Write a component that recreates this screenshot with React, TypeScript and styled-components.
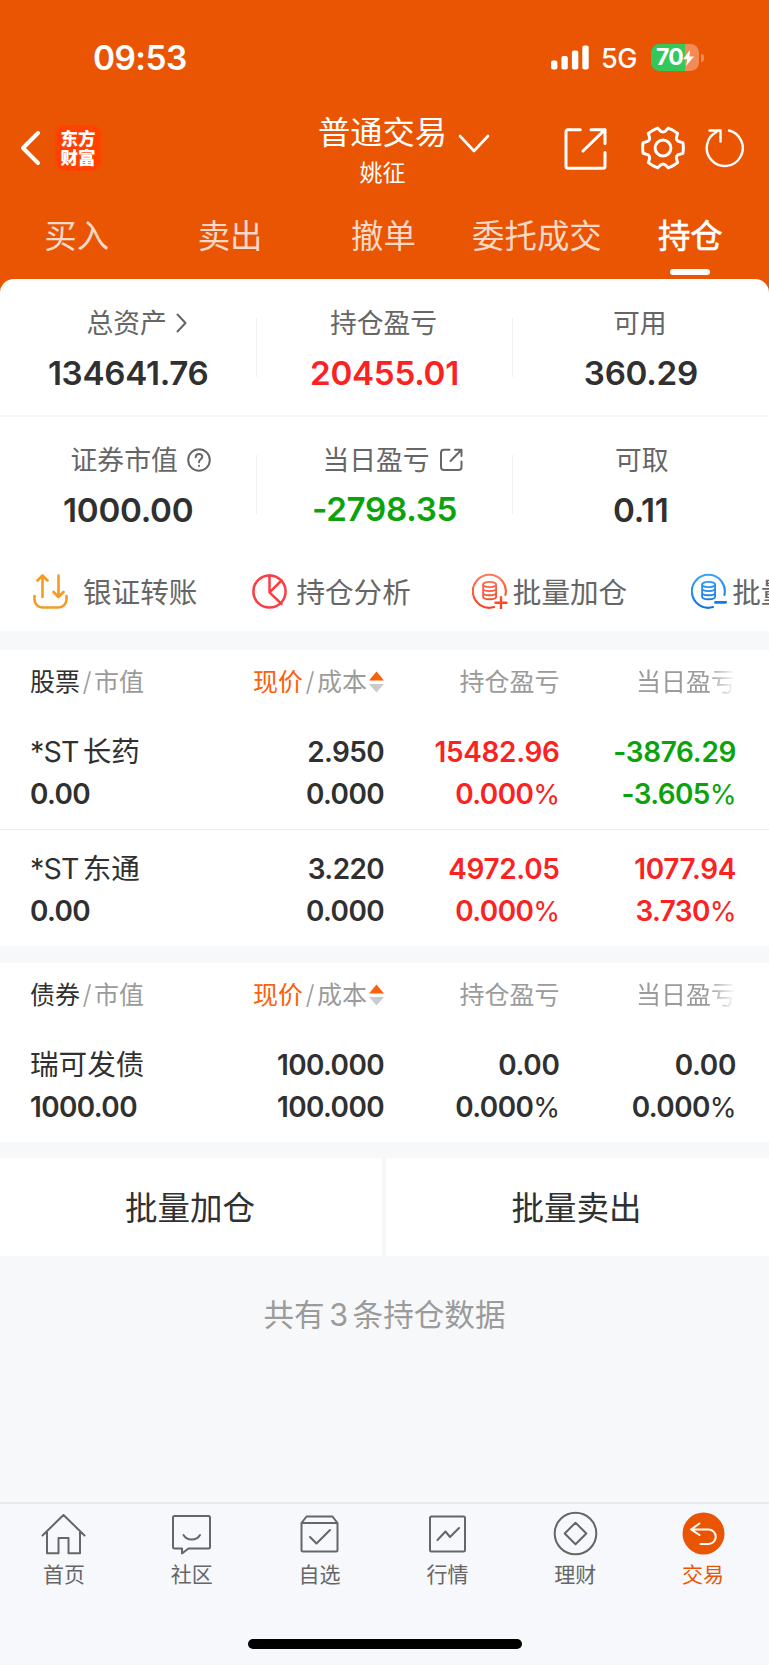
import React from "react";
import styled, { createGlobalStyle, css } from "styled-components";

const colors = {
  brand: "#ea5504",
  page: "#f7f8fa",
  ink: "#303030",
  label: "#666666",
  muted: "#9b9b9b",
  up: "#fb2222",
  down: "#0ba30b",
  accent: "#fb600a",
};

const Global = createGlobalStyle`
  *, *::before, *::after { box-sizing: border-box; }
  body {
    margin: 0;
    background: #f7f8fb;
    color: ${colors.ink};
    font-family: Inter, "Noto Sans CJK SC", sans-serif;
    text-autospace: no-autospace;
  }
  svg { display: block; flex: none; }
`;

type Tone = "ink" | "up" | "down";

const Screen = styled.div`
  width: 769px;
  height: 1665px;
  display: flex;
  flex-direction: column;
  overflow: hidden;
`;

const Header = styled.header`
  height: 293px;
  flex: none;
  background: ${colors.brand};
  color: #fff;
`;

const StatusBar = styled.div`
  height: 115px;
  padding: 0 65px 0 93px;
  display: flex;
  align-items: center;
  justify-content: space-between;
`;

const Clock = styled.span`
  font-size: 33.5px;
  font-weight: 580;
  line-height: 40px;
  letter-spacing: -0.6px;
`;

const StatusIcons = styled.div`
  display: flex;
  align-items: center;
  gap: 12px;
`;

const Network = styled.span`
  font-size: 27px;
  font-weight: 450;
  line-height: 30px;
  width: 38px;
  padding-top: 2px;
  letter-spacing: -0.5px;
`;

const Battery = styled.div`
  display: flex;
  align-items: center;
  gap: 2px;
`;

const BatteryBody = styled.div`
  width: 48px;
  height: 27px;
  padding-left: 5px;
  border-radius: 8.5px;
  display: flex;
  align-items: center;
  background: linear-gradient(90deg, #34c759 34px, #f28b55 34px);
  font-size: 23px;
  font-weight: 700;
  line-height: 27px;
  letter-spacing: -0.8px;
`;

const BatteryTip = styled.i`
  width: 3px;
  height: 8px;
  border-radius: 0 3px 3px 0;
  background: #f28b55;
`;

const NavBar = styled.div`
  height: 75px;
  padding: 0 25px 0 20px;
  display: grid;
  grid-template-columns: 1fr auto 1fr;
  align-items: start;
`;

const NavLeft = styled.div`
  padding-top: 10px;
  display: flex;
  align-items: center;
  gap: 13px;
`;

const Logo = styled.div`
  width: 46px;
  height: 46px;
  border-radius: 9px;
  display: flex;
  align-items: center;
  justify-content: center;
  background: #ff4200;
  text-align: center;
  font-size: 17.5px;
  font-weight: 900;
  line-height: 19.5px;
`;

const TitleBlock = styled.div`
  display: flex;
  margin-left: 44px;
  gap: 11px;
`;

const Titles = styled.div`
  display: flex;
  flex-direction: column;
  align-items: center;
`;

const Title = styled.h1`
  margin: 0;
  font-size: 32.3px;
  font-weight: 400;
  line-height: 36px;
`;

const Subtitle = styled.div`
  margin-top: 9px;
  font-size: 23px;
  line-height: 26px;
`;

const NavRight = styled.div`
  padding-top: 11px;
  display: flex;
  justify-content: flex-end;
  align-items: center;
`;

const TabList = styled.nav`
  display: grid;
  grid-template-columns: repeat(5, 1fr);
  padding-right: 2px;
`;

const Tab = styled.a<{ $active?: boolean }>`
  height: 85px;
  padding-top: 27px;
  display: flex;
  flex-direction: column;
  align-items: center;
  gap: 12px;
  font-size: 32.4px;
  line-height: 40px;
  color: rgba(255, 255, 255, ${(p) => (p.$active ? 1 : 0.78)});
  ${(p) =>
    p.$active &&
    css`
      -webkit-text-stroke: 0.6px #fff;
      &::after {
        content: "";
        width: 40px;
        height: 6px;
        border-radius: 3px;
        background: #fff;
      }
    `}
`;

const Summary = styled.section`
  flex: none;
  margin-top: -14px;
  height: 352px;
  border-radius: 14px 14px 0 0;
  background: #fff;
`;

const StatRow = styled.div`
  height: 136px;
  padding-top: 27px;
  display: grid;
  grid-template-columns: repeat(3, 1fr);
  & + & {
    padding-top: 26px;
    border-top: 2px solid #f7f7f8;
  }
`;

const Stat = styled.div<{ $raised?: boolean }>`
  position: relative;
  display: flex;
  flex-direction: column;
  align-items: center;
  gap: ${(p) => (p.$raised ? 13 : 14)}px;
  &:not(:last-child)::after {
    content: "";
    position: absolute;
    right: -0.5px;
    top: 12px;
    width: 1px;
    height: 59px;
    background: #f0f0f0;
  }
`;

const StatLabel = styled.div<{ $shift?: number }>`
  display: flex;
  align-items: center;
  gap: 9px;
  height: 34px;
  margin-left: ${(p) => p.$shift ?? 0}px;
  font-size: 26.8px;
  line-height: 34px;
  color: ${colors.label};
`;

const StatValue = styled.div<{ $tone: Tone }>`
  font-size: 33.2px;
  font-weight: 570;
  line-height: 38px;
  letter-spacing: -0.3px;
  color: ${(p) => colors[p.$tone]};
`;

const Actions = styled.div`
  height: 80px;
  padding-left: 33px;
  display: flex;
  align-items: center;
  overflow: hidden;
`;

const Action = styled.a<{ $gap: number }>`
  flex: 0 0 219.4px;
  display: flex;
  align-items: center;
  gap: ${(p) => p.$gap}px;
  white-space: nowrap;
  font-size: 28.6px;
  line-height: 36px;
  color: ${colors.label};
  span { padding-top: 3px; }
`;

const Holdings = styled.section<{ $gap: number }>`
  flex: none;
  margin-top: ${(p) => p.$gap}px;
  background: #fff;
`;

const columns = css`
  display: grid;
  grid-template-columns: 178px 176px 175.5px 176.5px;
  padding: 0 32px 0 30px;
`;

const HoldingsHead = styled.div`
  ${columns}
  height: 63px;
  align-items: center;
  font-size: 25px;
  line-height: 30px;
  color: ${colors.muted};
`;

const HeadCell = styled.div<{ $end?: boolean; $fade?: boolean }>`
  display: flex;
  align-items: center;
  justify-content: ${(p) => (p.$end ? "flex-end" : "flex-start")};
  white-space: nowrap;
  ${(p) =>
    p.$fade &&
    css`
      mask-image: linear-gradient(90deg, #000 calc(100% - 28px), transparent);
    `}
`;

const Emphasis = styled.span<{ $accent?: boolean }>`
  color: ${(p) => (p.$accent ? colors.accent : colors.ink)};
`;

const Slash = styled.span`
  width: 14px;
  text-align: center;
  font-size: 26px;
  font-weight: 300;
`;

const HoldingRow = styled.div`
  ${columns}
  height: 116px;
  padding-top: 18px;
  align-items: start;
  & + & {
    height: 117px;
    border-top: 1px solid #ececee;
  }
`;

const Cell = styled.div<{ $tone?: Tone; $end?: boolean }>`
  text-align: ${(p) => (p.$end ? "right" : "left")};
  font-size: 27.9px;
  font-weight: 570;
  line-height: 42px;
  letter-spacing: -0.3px;
  color: ${(p) => colors[p.$tone ?? "ink"]};
`;

const Rate = styled.div`
  letter-spacing: -0.6px;
`;

const Percent = styled.span`
  font-size: 0.98em;
  font-weight: 440;
`;

const Name = styled.div`
  font-size: 28.6px;
  font-weight: 400;
  letter-spacing: 0;
`;

const Value = styled.div`
  letter-spacing: -0.6px;
`;

const Ticker = styled.span`
  margin-right: 4px;
  letter-spacing: -0.8px;
`;

const BulkActions = styled.div`
  flex: none;
  margin-top: 16px;
  display: grid;
  grid-template-columns: 382px 1fr;
  gap: 4px;
  background: ${colors.page};
`;

const BulkButton = styled.button`
  height: 98px;
  padding: 4px 2px 0 0;
  border: 0;
  background: #fff;
  color: ${colors.ink};
  font: 400 32.5px/40px Inter, "Noto Sans CJK SC", sans-serif;
`;

const Count = styled.p`
  margin: 0;
  padding-top: 39px;
  flex: 1;
  text-align: center;
  font-size: 30.6px;
  line-height: 40px;
  color: ${colors.muted};
  span { margin: 0 4.5px; }
`;

const Body = styled.main`
  flex: 1;
  display: flex;
  flex-direction: column;
  background: ${colors.page};
`;

const BottomBar = styled.footer`
  height: 163px;
  flex: none;
  border-top: 2px solid #e9eaec;
  background: #f7f8fb;
  display: flex;
  flex-direction: column;
  justify-content: space-between;
  padding-bottom: 16px;
`;

const BottomNav = styled.nav`
  width: 767px;
  display: grid;
  grid-template-columns: repeat(6, 1fr);
`;

const BottomItem = styled.a<{ $active?: boolean }>`
  padding-top: 7px;
  display: flex;
  flex-direction: column;
  align-items: center;
  gap: 5px;
  font-size: 21px;
  line-height: 28px;
  color: ${(p) => (p.$active ? colors.brand : colors.label)};
`;

const HomeIndicator = styled.div`
  width: 274px;
  height: 10px;
  border-radius: 5px;
  background: #000;
  align-self: center;
`;

const Line = ({
  w,
  h,
  sw,
  children,
  className,
}: {
  w: number;
  h: number;
  sw: number;
  children: React.ReactNode;
  className?: string;
}) => (
  <svg
    className={className}
    width={w}
    height={h}
    viewBox={`0 0 ${w} ${h}`}
    fill="none"
    stroke="currentColor"
    strokeWidth={sw}
    strokeLinecap="round"
    strokeLinejoin="round"
  >
    {children}
  </svg>
);

const TitleChevron = styled(Line)`
  margin-top: 19px;
`;

const NavIcon = styled(Line)<{ $space: number }>`
  margin-right: ${(p) => p.$space}px;
`;

const TintedIcon = styled(Line)<{ $tint: string }>`
  color: ${(p) => p.$tint};
`;

const SignalIcon = () => (
  <svg width="38" height="25" viewBox="0 0 38 25" fill="#fff">
    <rect x="0" y="15.5" width="6.4" height="9" rx="2" />
    <rect x="10.4" y="11" width="6.4" height="13.5" rx="2" />
    <rect x="20.9" y="5.5" width="6.4" height="19" rx="2" />
    <rect x="31.3" y="0.5" width="6.4" height="24" rx="2" />
  </svg>
);

const gearPath = (() => {
  const at = (deg: number, r: number) => {
    const a = (deg * Math.PI) / 180;
    return `${(22 + r * Math.cos(a)).toFixed(2)} ${(22 + r * Math.sin(a)).toFixed(2)}`;
  };
  let d = `M${at(-15, 20.6)}`;
  for (let k = 0; k < 6; k++) {
    const t = k * 60;
    d += `Q${at(t, 20.8)} ${at(t + 15, 20.6)}L${at(t + 19, 18.4)}Q${at(t + 30, 13.8)} ${at(t + 41, 18.4)}L${at(t + 45, 20.6)}`;
  }
  return d + "Z";
})();

const TransferIcon = () => (
  <TintedIcon w={35} h={35} sw={2.6} $tint="#f59a23">
    <path d="M9.5 23V1.500M4.500 6.500l5-5 5 5M25.500 1.500V23M20.500 18l5 5 5-5" />
    <path d="M1.500 22v3.500a8 8 0 0 0 8 8h16a8 8 0 0 0 8-8V22" />
  </TintedIcon>
);

const PieIcon = () => (
  <TintedIcon w={35} h={35} sw={2.5} $tint="#fb3d42">
    <circle cx="17.5" cy="17.5" r="16.1" />
    <path d="M17.5 1.5v16.8L29.5 6.5M17.5 18.3l12 11.5" />
  </TintedIcon>
);

const CoinsIcon = ({ kind }: { kind: "plus" | "minus" }) => {
  const id = `coins-${kind}`;
  const [from, to] = kind === "plus" ? ["#ff7a5c", "#fb3d22"] : ["#36a6fb", "#0f6fea"];
  return (
    <svg
      width="36"
      height="36"
      viewBox="0 0 36 36"
      fill="none"
      stroke={`url(#${id})`}
      strokeWidth="2.1"
      strokeLinecap="round"
    >
      <defs>
        <linearGradient id={id} gradientUnits="userSpaceOnUse" x1="0" y1="0" x2="0" y2="36">
          <stop stopColor={from} />
          <stop offset="1" stopColor={to} />
        </linearGradient>
      </defs>
      <path d="M22 34.1A16.5 16.5 0 1 1 33.4 22" />
      <g strokeWidth="1.8">
        <ellipse cx="17.6" cy="11.5" rx="6.5" ry="2.6" />
        <path d="M11.1 11.5v12.2c0 3.4 13 3.4 13 0V11.5M11.1 15.6c0 3.4 13 3.4 13 0M11.1 19.7c0 3.4 13 3.4 13 0" />
      </g>
      {kind === "plus" ? (
        <path d="M23.5 29.8h11M29 24.3v11" strokeWidth="2.4" />
      ) : (
        <path d="M24.5 29.4h10v.02" strokeWidth="2.8" />
      )}
    </svg>
  );
};

const SortArrows = styled.svg`
  margin-left: 2px;
`;

const SortIcon = () => (
  <SortArrows width="15" height="22" viewBox="0 0 15 22">
    <path d="M7.5 0.5 15 9.5H0z" fill={colors.accent} />
    <path d="M7.5 21.5 15 13H0z" fill="#cbcbcb" />
  </SortArrows>
);

interface Holding {
  ticker?: string;
  name: string;
  value: string;
  price: string;
  cost: string;
  total: [string, string, Tone];
  today: [string, string, Tone];
}

const stocks: Holding[] = [
  { ticker: "*ST", name: "长药", value: "0.00", price: "2.950", cost: "0.000", total: ["15482.96", "0.000", "up"], today: ["-3876.29", "-3.605", "down"] },
  { ticker: "*ST", name: "东通", value: "0.00", price: "3.220", cost: "0.000", total: ["4972.05", "0.000", "up"], today: ["1077.94", "3.730", "up"] },
];

const bonds: Holding[] = [
  { name: "瑞可发债", value: "1000.00", price: "100.000", cost: "100.000", total: ["0.00", "0.000", "ink"], today: ["0.00", "0.000", "ink"] },
];

const ProfitCell = ({ data: [amount, rate, tone] }: { data: [string, string, Tone] }) => (
  <Cell $end $tone={tone}>
    <div>{amount}</div>
    <Rate>
      {rate}
      <Percent>%</Percent>
    </Rate>
  </Cell>
);

const HoldingsTable = ({ title, rows, gap }: { title: string; rows: Holding[]; gap: number }) => (
  <Holdings $gap={gap}>
    <HoldingsHead>
      <HeadCell>
        <Emphasis>{title}</Emphasis>
        <Slash>/</Slash>市值
      </HeadCell>
      <HeadCell $end>
        <Emphasis $accent>现价</Emphasis>
        <Slash>/</Slash>成本
        <SortIcon />
      </HeadCell>
      <HeadCell $end>持仓盈亏</HeadCell>
      <HeadCell $end $fade>当日盈亏</HeadCell>
    </HoldingsHead>
    {rows.map((r) => (
      <HoldingRow key={r.name}>
        <Cell>
          <Name>
            {r.ticker && <Ticker>{r.ticker}</Ticker>}
            {r.name}
          </Name>
          <Value>{r.value}</Value>
        </Cell>
        <Cell $end>
          <Value>{r.price}</Value>
          <Value>{r.cost}</Value>
        </Cell>
        <ProfitCell data={r.total} />
        <ProfitCell data={r.today} />
      </HoldingRow>
    ))}
  </Holdings>
);

const bottomItems: { label: string; icon: React.ReactNode; active?: boolean }[] = [
  { label: "首页", icon: <path d="M1.5 24.5 22.5 4 43.5 24.5M6 21v21.2h11.5V27h10v15.2H39V21" /> },
  { label: "社区", icon: <><path d="M5.5 5h34a1.5 1.5 0 0 1 1.5 1.5v29.5a1.5 1.5 0 0 1-1.5 1.5H19.5L13 42.5v-5H5.5A1.5 1.5 0 0 1 4 36V6.5A1.5 1.5 0 0 1 5.5 5z" /><path d="M14.5 24c3.5 6 13 6 16.5 0" /></> },
  { label: "自选", icon: <><path d="M4.5 12 9.5 5.5h26L40.5 12v27a1.5 1.5 0 0 1-1.5 1.5H6A1.5 1.5 0 0 1 4.5 39zM4.5 12h36" /><path d="M13 26l6.5 6.5L33 19" /></> },
  { label: "行情", icon: <><rect x="5" y="5.5" width="35" height="35" rx="1.5" /><path d="M12.5 29l8-8.5 4.500 5.500 9-9" /></> },
  { label: "理财", icon: <><circle cx="22.5" cy="22.5" r="20.8" /><path d="M22.5 11.7 33.3 22.5 22.5 33.3 11.7 22.5z" /></> },
  { label: "交易", active: true, icon: <><circle cx="22.5" cy="22.5" r="21" fill={colors.brand} stroke="none" /><path d="M18.5 12.5 10 18.5l8.5 5.5M11 18.5h16.5a7 7 0 0 1 0 14.5h-8" stroke="#fff" strokeWidth="2" /></> },
];

const App = () => (
  <>
    <Global />
    <Screen>
      <Header>
        <StatusBar>
          <Clock>09:53</Clock>
          <StatusIcons>
            <SignalIcon />
            <Network>5G</Network>
            <Battery>
              <BatteryBody>
                70
                <svg width="11" height="16" viewBox="0 0 11 16" fill="#fff">
                  <path d="M7 0 0 9.3h4.3L3 16l8-9.500H6.500z" />
                </svg>
              </BatteryBody>
              <BatteryTip />
            </Battery>
          </StatusIcons>
        </StatusBar>
        <NavBar>
          <NavLeft>
            <Line w={22} h={36} sw={4}>
              <path d="M18 3 3 18 18 33" />
            </Line>
            <Logo>
              东方
              <br />
              财富
            </Logo>
          </NavLeft>
          <TitleBlock>
            <Titles>
              <Title>普通交易</Title>
              <Subtitle>姚征</Subtitle>
            </Titles>
            <TitleChevron w={32} h={20} sw={2.6}>
              <path d="M2 2 16 17 30 2" />
            </TitleChevron>
          </TitleBlock>
          <NavRight>
            <NavIcon w={44} h={44} sw={3} $space={34}>
              <path d="M17.3 3.7H5a2 2 0 0 0-2 2v34.600a2 2 0 0 0 2 2h35a2 2 0 0 0 2-2V26.500M28 3.700h14V17.500M42 3.700 20 25" />
            </NavIcon>
            <NavIcon w={44} h={44} sw={3} $space={19}>
              <path d={gearPath} />
              <circle cx="22" cy="22" r="7.9" />
            </NavIcon>
            <Line w={40} h={44} sw={2.4}>
              <path d="M25 4.5A18 18 0 1 1 12.5 6M5.5 4.500h11v11" />
            </Line>
          </NavRight>
        </NavBar>
        <TabList>
          {["买入", "卖出", "撤单", "委托成交", "持仓"].map((t) => (
            <Tab key={t} $active={t === "持仓"}>
              {t}
            </Tab>
          ))}
        </TabList>
      </Header>

      <Body>
        <Summary>
          <StatRow>
            <Stat>
              <StatLabel $shift={17}>
                总资产
                <Line w={11} h={20} sw={2}>
                  <path d="M1.5 1.500 9.500 10l-8 8.500" />
                </Line>
              </StatLabel>
              <StatValue $tone="ink">134641.76</StatValue>
            </Stat>
            <Stat>
              <StatLabel $shift={-2}>持仓盈亏</StatLabel>
              <StatValue $tone="up">20455.01</StatValue>
            </Stat>
            <Stat>
              <StatLabel $shift={-2}>可用</StatLabel>
              <StatValue $tone="ink">360.29</StatValue>
            </Stat>
          </StatRow>
          <StatRow>
            <Stat>
              <StatLabel $shift={25}>
                证券市值
                <Line w={24} h={24} sw={2}>
                  <circle cx="12" cy="12" r="10.8" />
                  <path d="M8.7 9.300c.2-4.600 6.800-4.300 6.600-.4-.1 2.400-3.300 2.500-3.300 5.300M12 17.800v.2" />
                </Line>
              </StatLabel>
              <StatValue $tone="ink">1000.00</StatValue>
            </Stat>
            <Stat $raised>
              <StatLabel $shift={16}>
                当日盈亏
                <Line w={24} h={24} sw={2}>
                  <path d="M10.5 1.800H5a3 3 0 0 0-3 3V19a3 3 0 0 0 3 3h14.500a3 3 0 0 0 3-3v-5.500M16 1.800h6.500V8M22 2.300 11.500 13" />
                </Line>
              </StatLabel>
              <StatValue $tone="down">-2798.35</StatValue>
            </Stat>
            <Stat>
              <StatLabel $shift={2}>可取</StatLabel>
              <StatValue $tone="ink">0.11</StatValue>
            </Stat>
          </StatRow>
          <Actions>
            <Action $gap={15}><TransferIcon /><span>银证转账</span></Action>
            <Action $gap={9}><PieIcon /><span>持仓分析</span></Action>
            <Action $gap={5}><CoinsIcon kind="plus" /><span>批量加仓</span></Action>
            <Action $gap={5}><CoinsIcon kind="minus" /><span>批量卖出</span></Action>
          </Actions>
        </Summary>

        <HoldingsTable title="股票" rows={stocks} gap={19} />
        <HoldingsTable title="债券" rows={bonds} gap={17} />

        <BulkActions>
          <BulkButton>批量加仓</BulkButton>
          <BulkButton>批量卖出</BulkButton>
        </BulkActions>
        <Count>
          共有<span>3</span>条持仓数据
        </Count>
      </Body>

      <BottomBar>
        <BottomNav>
          {bottomItems.map((b) => (
            <BottomItem key={b.label} $active={b.active}>
              <Line w={45} h={45} sw={2}>
                {b.icon}
              </Line>
              {b.label}
            </BottomItem>
          ))}
        </BottomNav>
        <HomeIndicator />
      </BottomBar>
    </Screen>
  </>
);

export default App;
